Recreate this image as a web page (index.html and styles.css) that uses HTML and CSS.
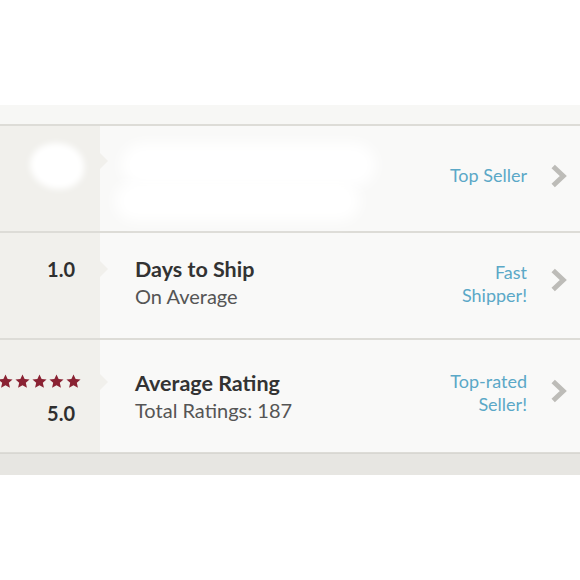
FILE: index.html
```html
<!DOCTYPE html>
<html>
<head>
<meta charset="utf-8">
<link rel="stylesheet" href="styles.css">
</head>
<body>
<div class="top-space"></div>
<div class="panel">
  <div class="band-top"></div>
  <div class="row row-1">
    <div class="left"><div class="blob-avatar"></div></div>
    <div class="main">
      <div class="info"><div class="blob-name"></div><div class="blob-name2"></div></div>
      <div class="label">Top Seller</div>
      <svg class="chev" viewBox="0 0 16 22"><path d="M3 2 L12.5 11 L3 20" fill="none" stroke="#bdbcb8" stroke-width="4.6"/></svg>
    </div>
  </div>
  <div class="row row-2">
    <div class="left"><div class="num">1.0</div></div>
    <div class="main">
      <div class="info">
        <div class="title">Days to Ship</div>
        <div class="sub">On Average</div>
      </div>
      <div class="label">Fast<br>Shipper!</div>
      <svg class="chev" viewBox="0 0 16 22"><path d="M3 2 L12.5 11 L3 20" fill="none" stroke="#bdbcb8" stroke-width="4.6"/></svg>
    </div>
  </div>
  <div class="row row-3">
    <div class="left">
      <div class="stars">
        <svg viewBox="0 0 24 24"><path d="M12 0.8l3.4 7.2 7.9.8-6 5.3 1.8 7.9L12 17.9l-7.1 4.1 1.8-7.9-6-5.3 7.9-.8z"/></svg>
        <svg viewBox="0 0 24 24"><path d="M12 0.8l3.4 7.2 7.9.8-6 5.3 1.8 7.9L12 17.9l-7.1 4.1 1.8-7.9-6-5.3 7.9-.8z"/></svg>
        <svg viewBox="0 0 24 24"><path d="M12 0.8l3.4 7.2 7.9.8-6 5.3 1.8 7.9L12 17.9l-7.1 4.1 1.8-7.9-6-5.3 7.9-.8z"/></svg>
        <svg viewBox="0 0 24 24"><path d="M12 0.8l3.4 7.2 7.9.8-6 5.3 1.8 7.9L12 17.9l-7.1 4.1 1.8-7.9-6-5.3 7.9-.8z"/></svg>
        <svg viewBox="0 0 24 24"><path d="M12 0.8l3.4 7.2 7.9.8-6 5.3 1.8 7.9L12 17.9l-7.1 4.1 1.8-7.9-6-5.3 7.9-.8z"/></svg>
      </div>
      <div class="num">5.0</div>
    </div>
    <div class="main">
      <div class="info">
        <div class="title">Average Rating</div>
        <div class="sub">Total Ratings: 187</div>
      </div>
      <div class="label">Top-rated<br>Seller!</div>
      <svg class="chev" viewBox="0 0 16 22"><path d="M3 2 L12.5 11 L3 20" fill="none" stroke="#bdbcb8" stroke-width="4.6"/></svg>
    </div>
  </div>
  <div class="band-bottom"></div>
</div>
</body>
</html>
```
FILE: styles.css
```css
html, body {
  margin: 0;
  padding: 0;
  background: #ffffff;
  font-family: Lato, "Liberation Sans", sans-serif;
}
.top-space {
  height: 105px;
}
.panel {
  overflow: hidden;
}
.band-top {
  height: 19px;
  background: #f7f7f5;
  border-bottom: 2px solid #dddcd7;
}
.row {
  display: flex;
  border-bottom: 2px solid #dddcd7;
}
.row-1 { height: 105px; }
.row-2 { height: 105px; }
.row-3 { height: 112px; border-bottom-width: 1px; }
.left {
  position: relative;
  width: 100px;
  flex: none;
  background: #f1f0ec;
  display: flex;
  flex-direction: column;
  align-items: flex-end;
  justify-content: center;
  padding-right: 25px;
  box-sizing: border-box;
}
.left::after {
  content: "";
  position: absolute;
  right: -8px;
  top: 30px;
  border-left: 8px solid #f1f0ec;
  border-top: 8px solid transparent;
  border-bottom: 8px solid transparent;
}
.row-1 .left::after { top: 27px; }
.row-2 .left::after { top: 28px; }
.row-3 .left::after { top: 34px; }
.main {
  flex: 1;
  background: #f9f9f8;
  display: flex;
  align-items: center;
  padding-left: 35px;
  padding-right: 13px;
}
.info {
  flex: 1;
}
.title {
  font-size: 21.5px;
  font-weight: 700;
  color: #333333;
  line-height: 28px;
}
.sub {
  font-size: 20px;
  color: #555555;
  line-height: 27px;
}
.row-2 .info { margin-top: -6px; }
.row-3 .info { margin-top: 0px; }
.num {
  font-size: 20px;
  font-weight: 700;
  color: #2f2f2f;
}
.row-2 .num { margin-top: -34px; }
.row-3 .num { margin-top: 12px; margin-bottom: -12px; }
.stars {
  display: flex;
  gap: 2px;
  margin-right: -6px;
  margin-top: -5px;
}
.stars svg {
  width: 15px;
  height: 15px;
  fill: #8a2233;
}
.label {
  font-size: 18px;
  color: #5ba8c7;
  text-align: right;
  line-height: 23px;
  margin-right: 23px;
}
.row-1 .label { margin-top: -6px; }
.row-2 .label { margin-top: -4px; }
.row-3 .label { margin-top: -6px; }
.chev {
  width: 17px;
  height: 24px;
  flex: none;
}
.row-1 .chev { margin-top: -6px; }
.row-2 .chev { margin-top: -12px; }
.row-3 .chev { margin-top: -10px; }
.blob-avatar {
  width: 54px;
  height: 46px;
  background: #ffffff;
  border-radius: 48% 52% 45% 55%;
  filter: blur(3px);
  margin-right: -9px;
  margin-top: -26px;
}
.blob-name {
  width: 255px;
  height: 44px;
  background: #ffffff;
  border-radius: 24px;
  filter: blur(7px);
  margin-left: -14px;
  margin-top: 6px;
}
.blob-name2 {
  width: 245px;
  height: 40px;
  background: #ffffff;
  border-radius: 20px;
  filter: blur(7px);
  margin-left: -20px;
  margin-top: -6px;
}
.band-bottom {
  height: 21px;
  background: #e7e6e2;
  border-top: 1px solid #d8d7d2;
}
```
